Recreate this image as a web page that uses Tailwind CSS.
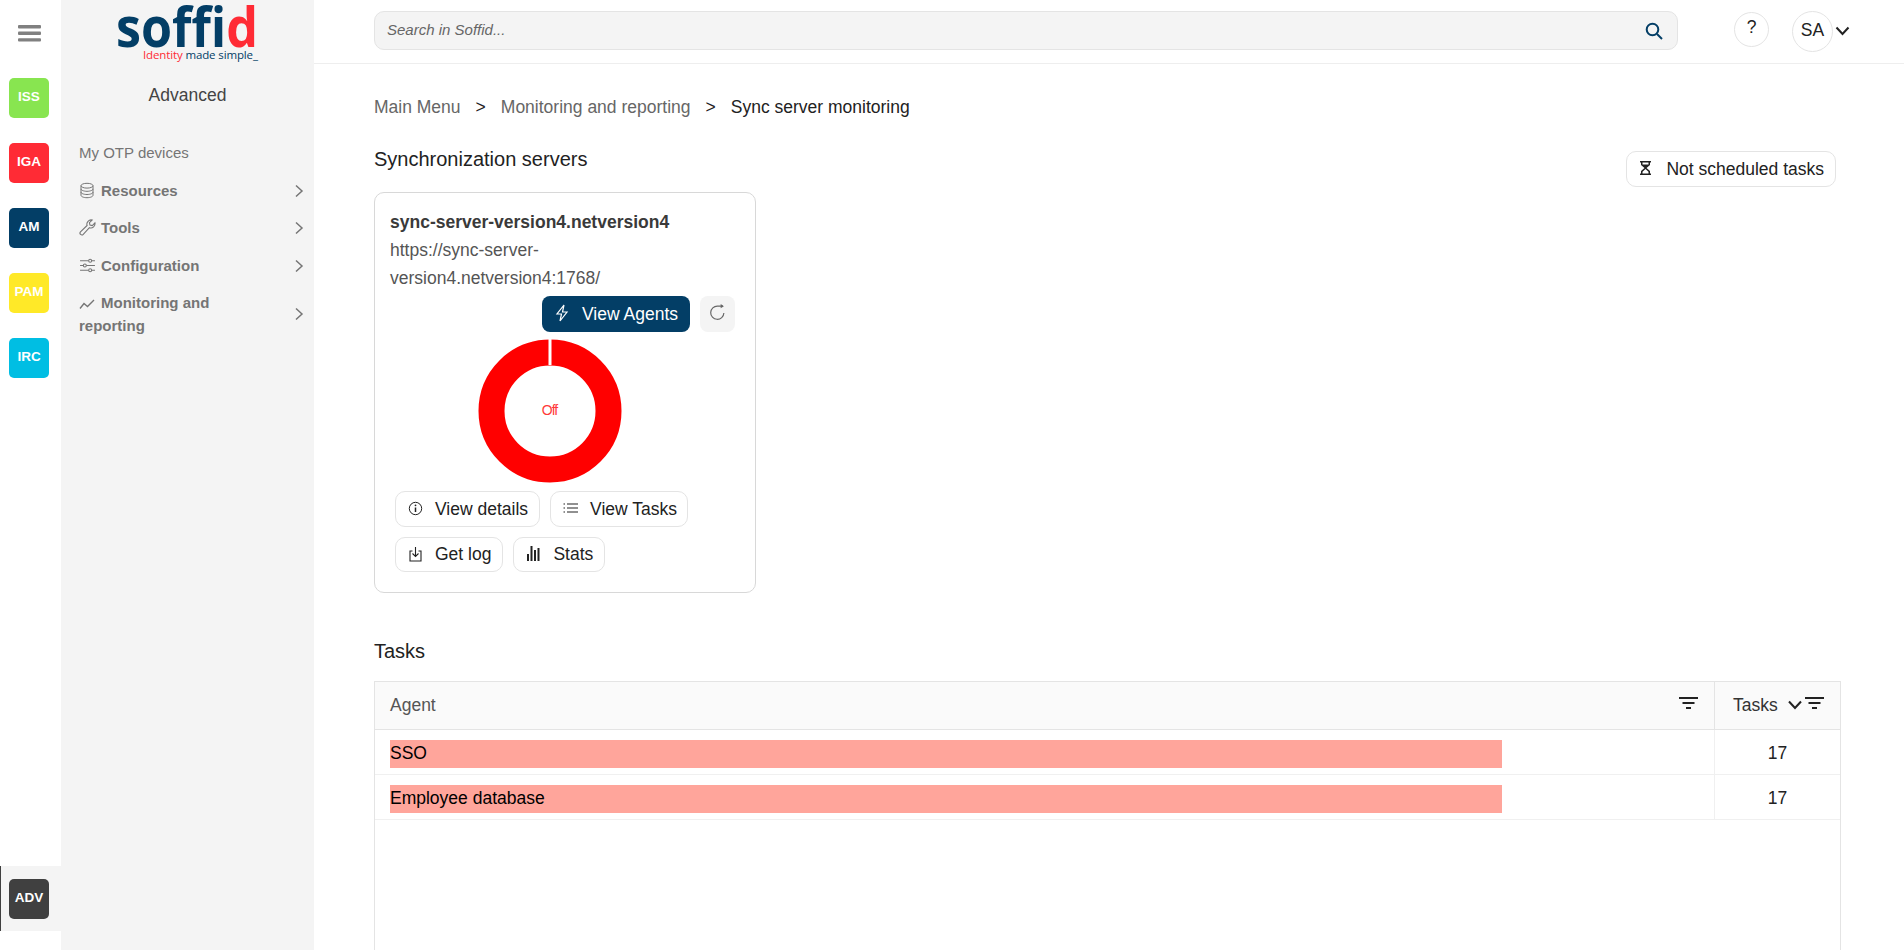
<!DOCTYPE html>
<html>

<head>
    <meta name="viewport" content="width=device-width, initial-scale=1.0">
    <script src="https://cdn.jsdelivr.net/npm/@tailwindcss/browser@4"></script>
    <title>Sync server monitoring</title>
</head>

<body class="bg-white font-['Liberation_Sans',Arial,sans-serif] text-[17.5px] text-[#222] h-[950px] overflow-hidden">
    <div class="flex h-[950px]">
        <!-- application rail -->
        <div class="w-[61px] shrink-0 flex flex-col">
            <div class="h-[78px] flex justify-center pt-[25px] pr-[3px]">
                <svg width="23" height="17" viewBox="0 0 23 17" fill="#808080"><rect y="0" width="23" height="3.4" rx="1"/><rect y="6.6" width="23" height="3.4" rx="1"/><rect y="13.2" width="23" height="3.4" rx="1"/></svg>
            </div>
            <div class="flex flex-col gap-[25px] pl-[9px]">
                <div class="w-10 h-10 rounded-[5px] bg-[#88e550] text-white text-[13.5px] font-bold flex items-center justify-center pb-[2px]">ISS</div>
                <div class="w-10 h-10 rounded-[5px] bg-[#ff2b35] text-white text-[13.5px] font-bold flex items-center justify-center pb-[2px]">IGA</div>
                <div class="w-10 h-10 rounded-[5px] bg-[#033e66] text-white text-[13.5px] font-bold flex items-center justify-center pb-[2px]">AM</div>
                <div class="w-10 h-10 rounded-[5px] bg-[#ffe928] text-white text-[13.5px] font-bold flex items-center justify-center pb-[2px]">PAM</div>
                <div class="w-10 h-10 rounded-[5px] bg-[#00bee3] text-white text-[13.5px] font-bold flex items-center justify-center pb-[2px]">IRC</div>
            </div>
            <div class="mt-auto mb-[19px] h-[65px] bg-[#f4f4f4] border-l border-[#404040] pl-[8px] flex items-center">
                <div class="w-10 h-10 rounded-[5px] bg-[#404040] text-white text-[13.5px] font-bold flex items-center justify-center pb-[1px]">ADV</div>
            </div>
        </div>

        <!-- sidebar -->
        <div class="w-[253px] shrink-0 bg-[#f4f4f4] flex flex-col">
            <svg class="h-[63px] w-[253px] shrink-0" viewBox="0 0 253 63">
                <text x="55" y="47" textLength="142" lengthAdjust="spacingAndGlyphs" font-family="Open Sans" font-weight="700" font-size="55" fill="#033e66">soff<tspan fill="#ff2b35">id</tspan></text>
                <text x="82" y="59" textLength="115" font-family="Open Sans" font-size="11.5" fill="#033e66"><tspan fill="#ff2b35">Identity</tspan> made simple_</text>
            </svg>
            <div class="text-center text-[#444] leading-[26px] mt-[19px]">Advanced</div>
            <div class="mt-[33px] pl-[18px] pr-[10px] text-[#757575] text-[15px] leading-[23px]">
                <div class="h-[23px]">My OTP devices</div>
                <div class="flex items-center justify-between font-bold mt-[15px] h-[23px]">
                    <span class="flex items-center gap-[6px]">
                        <svg width="16" height="17" viewBox="0 0 16 16" fill="none" stroke="#757575" stroke-width="1"><ellipse cx="8" cy="3.2" rx="6" ry="2.4"/><path d="M2 3.2v9.6c0 1.3 2.7 2.4 6 2.4s6-1.1 6-2.4V3.2M2 6.4c0 1.3 2.7 2.4 6 2.4s6-1.1 6-2.4M2 9.6c0 1.3 2.7 2.4 6 2.4s6-1.1 6-2.4"/></svg>
                        Resources
                    </span>
                    <svg width="10" height="14" viewBox="0 0 10 14" fill="none" stroke="#757575" stroke-width="1.5"><path d="M2 1.5 8 7l-6 5.5"/></svg>
                </div>
                <div class="flex items-center justify-between font-bold mt-[14px] h-[23px]">
                    <span class="flex items-center gap-[5px]">
                        <svg width="17" height="17" viewBox="0 0 16 16" fill="none" stroke="#757575" stroke-width="1"><path d="M15 3.6a4 4 0 0 1-5.2 4.6L4 14.4a1.7 1.7 0 0 1-2.6-2.3l6.2-6A4 4 0 0 1 12.4 1L9.8 3.5l.5 2.2 2.2.5z"/></svg>
                        Tools
                    </span>
                    <svg width="10" height="14" viewBox="0 0 10 14" fill="none" stroke="#757575" stroke-width="1.5"><path d="M2 1.5 8 7l-6 5.5"/></svg>
                </div>
                <div class="flex items-center justify-between font-bold mt-[15px] h-[23px]">
                    <span class="flex items-center gap-[5px]">
                        <svg width="17" height="15" viewBox="0 0 16 14" fill="none" stroke="#757575" stroke-width="1"><path d="M1 2.5h8M12 2.5h3M1 7h3M7 7h8M1 11.5h8M12 11.5h3"/><circle cx="10.5" cy="2.5" r="1.4"/><circle cx="5.5" cy="7" r="1.4"/><circle cx="10.5" cy="11.5" r="1.4"/></svg>
                        Configuration
                    </span>
                    <svg width="10" height="14" viewBox="0 0 10 14" fill="none" stroke="#757575" stroke-width="1.5"><path d="M2 1.5 8 7l-6 5.5"/></svg>
                </div>
                <div class="flex items-center justify-between font-bold mt-[14px]">
                    <div class="w-[150px]">
                        <svg class="inline-block mr-[6px] align-[-2px]" width="16" height="12" viewBox="0 0 16 12" fill="none" stroke="#757575" stroke-width="1.4"><path d="M1 10.5 5 5.5l3.500 3L15 2"/></svg>Monitoring and reporting
                    </div>
                    <svg width="10" height="14" viewBox="0 0 10 14" fill="none" stroke="#757575" stroke-width="1.5"><path d="M2 1.5 8 7l-6 5.5"/></svg>
                </div>
            </div>
        </div>

        <!-- main -->
        <div class="flex-1 min-w-0 flex flex-col">
            <div class="h-[64px] shrink-0 border-b border-[#eeeeee] flex pl-[60px]">
                <div class="w-[1304px] h-[39px] mt-[11px] bg-[#f4f4f4] border border-[#e4e4e4] rounded-[10px] flex items-center justify-between pl-[12px] pr-[14px]">
                    <span class="italic text-[15px] text-[#666]">Search in Soffid...</span>
                    <svg width="18" height="18" viewBox="0 0 18 18" fill="none" stroke="#033e66" stroke-width="2"><circle cx="7.5" cy="7.5" r="5.8"/><path d="m12 12 5 5"/></svg>
                </div>
                <div class="w-[35px] h-[35px] ml-[56px] mt-[12px] rounded-full border border-[#e4e4e4] flex items-center justify-center pb-[5px]">?</div>
                <div class="w-[41px] h-[41px] ml-[23px] mt-[11px] rounded-full border border-[#e4e4e4] flex items-center justify-center pb-[3px]">SA</div>
                <svg class="ml-[2px] mt-[26px]" width="15" height="10" viewBox="0 0 15 10" fill="none" stroke="#222" stroke-width="2"><path d="M1.5 1.5 7.5 8l6-6.500"/></svg>
            </div>

            <div class="flex-1 min-h-0 pl-[60px] pr-[63px] overflow-hidden flex flex-col">
                <div class="mt-[31px] h-[25px] leading-[25px] flex whitespace-nowrap">
                    <span class="text-[#666]">Main Menu</span>
                    <span class="mx-[15px]">&gt;</span>
                    <span class="text-[#666]">Monitoring and reporting</span>
                    <span class="mx-[15px]">&gt;</span>
                    <span>Sync server monitoring</span>
                </div>
                <div class="flex justify-between mt-[23px] pr-[5px]">
                    <div class="text-[20px] leading-[28px] mt-[2px]">Synchronization servers</div>
                    <button class="h-[36px] mt-[8px] px-[11px] rounded-[10px] border border-[#e4e4e4] flex items-center gap-[13px]">
                        <svg class="mb-[2px]" width="15" height="16" viewBox="0 0 15 16" fill="#222"><path d="M2 1h11v1.500h-1v2.500L8.500 8 12 11v2.500h1V15H2v-1.500h1V11l3.500-3L3 5V2.500H2zM4.500 2.500V4.500h6V2.500zM7.500 9l-3 2.700v1.800h6v-1.800z"/></svg>
                        Not scheduled tasks
                    </button>
                </div>

                <!-- server card -->
                <div class="w-[382px] h-[401px] mt-[5px] border border-[#d8d8d8] rounded-[10px] pt-[15px] px-[15px]">
                    <div class="font-bold text-[#3a3a3a] leading-[28px]">sync-server-version4.netversion4</div>
                    <div class="text-[#555] leading-[28px] w-[300px]">https://sync-server-version4.netversion4:1768/</div>
                    <div class="flex justify-end gap-[10px] pr-[5px] mt-[4px]">
                        <button class="h-[36px] px-[12px] rounded-[8px] bg-[#033e66] text-white flex items-center gap-[12px]">
                            <svg class="mb-[2px]" width="16" height="18" viewBox="0 0 16 18" fill="none" stroke="#fff" stroke-width="1.200"><path d="M10 1 3 10h4.500L6 17l7-9H8.500z"/></svg>
                            View Agents
                        </button>
                        <button class="w-[35px] h-[36px] rounded-[8px] bg-[#f4f4f4] flex items-center justify-center pb-[4px]">
                            <svg width="17" height="17" viewBox="0 0 16 16" fill="none" stroke="#666" stroke-width="1.100"><path d="M14 8.500A6.200 6.200 0 1 1 8 2h5"/><path d="M11 0l3 2-3 2z" fill="#666" stroke="none"/></svg>
                        </button>
                    </div>
                    <div class="flex justify-center pr-[31px] mt-[7px]">
                        <div class="relative w-[144px] h-[144px]">
                            <svg width="144" height="144" viewBox="0 0 144 144">
                                <circle cx="72" cy="72" r="58.500" fill="none" stroke="#ff0000" stroke-width="26"/>
                                <rect x="70.500" y="0" width="3" height="26" fill="#fff"/>
                            </svg>
                            <div class="absolute inset-0 flex items-center justify-center text-[14px] tracking-[-1px] text-[#ff3a3a] pb-[1px]">Off</div>
                        </div>
                    </div>
                    <div class="flex flex-wrap gap-x-[10px] gap-y-[10px] mt-[8px] pl-[5px]">
                        <button class="h-[36px] pl-[12px] pr-[11px] rounded-[10px] border border-[#e4e4e4] flex items-center gap-[12px]">
                            <svg class="mb-[2px]" width="15" height="15" viewBox="0 0 15 15" fill="none" stroke="#222" stroke-width="1"><circle cx="7.500" cy="7.500" r="6.200"/><path d="M7.500 6.500V11" stroke-width="1.500"/><circle cx="7.500" cy="4.300" r=".9" fill="#222" stroke="none"/></svg>
                            View details
                        </button>
                        <button class="h-[36px] pl-[12px] pr-[10px] rounded-[10px] border border-[#e4e4e4] flex items-center gap-[12px]">
                            <svg class="mb-[2px]" width="15" height="12" viewBox="0 0 15 12" fill="none" stroke="#222" stroke-width="1.200"><path d="M4 2h11M4 6h11M4 10h11M.5 2h1.500M.5 6h1.500M.5 10h1.500"/></svg>
                            View Tasks
                        </button>
                        <button class="h-[35px] pl-[12px] pr-[11px] rounded-[10px] border border-[#e4e4e4] flex items-center gap-[12px]">
                            <svg class="mb-[2px]" width="15" height="16" viewBox="0 0 15 16" fill="none" stroke="#222" stroke-width="1.100"><path d="M4.500 5H2v10h11V5h-2.500M7.500 1v9.500M4.500 7.500l3 3 3-3"/></svg>
                            Get log
                        </button>
                        <button class="h-[35px] pl-[12px] pr-[11px] rounded-[10px] border border-[#e4e4e4] flex items-center gap-[11px]">
                            <svg class="mb-[2px]" width="16" height="17" viewBox="0 0 16 17" fill="#222"><rect x="1" y="9" width="2" height="7"/><rect x="4.500" y="1" width="2" height="15"/><rect x="8" y="5" width="2" height="11"/><rect x="11.500" y="3" width="2" height="13"/></svg>
                            Stats
                        </button>
                    </div>
                </div>

                <div class="text-[20px] leading-[28px] mt-[44px]">Tasks</div>

                <!-- tasks table -->
                <div class="mt-[16px] flex-1 border-x border-t border-[#e4e4e4] flex flex-col">
                    <div class="h-[48px] shrink-0 bg-[#fafafa] border-b border-[#e4e4e4] flex">
                        <div class="flex-1 pl-[15px] pr-[16px] flex items-center justify-between text-[#555]">
                            Agent
                            <svg class="mb-[5px]" width="19" height="13" viewBox="0 0 19 13" fill="#222"><rect width="19" height="2"/><rect x="3.500" y="5" width="12" height="2"/><rect x="7" y="10" width="5" height="2"/></svg>
                        </div>
                        <div class="w-[126px] border-l border-[#e4e4e4] flex items-center pl-[18px] text-[#333]">
                            Tasks
                            <svg class="ml-[10px] mb-[1px]" width="14" height="10" viewBox="0 0 14 10" fill="none" stroke="#222" stroke-width="2"><path d="M1 1.500 7 8l6-6.500"/></svg>
                            <svg class="ml-[3px] mb-[5px]" width="19" height="13" viewBox="0 0 19 13" fill="#222"><rect width="19" height="2"/><rect x="3.500" y="5" width="12" height="2"/><rect x="7" y="10" width="5" height="2"/></svg>
                        </div>
                    </div>
                    <div class="h-[45px] shrink-0 border-b border-[#f0f0f0] flex">
                        <div class="flex-1 pl-[15px] pt-[10px]">
                            <div class="h-[28px] w-[1112px] bg-[#ffa59b] text-black leading-[26px]">SSO</div>
                        </div>
                        <div class="w-[126px] border-l border-[#f0f0f0] flex items-center justify-center pt-[2px]">17</div>
                    </div>
                    <div class="h-[45px] shrink-0 border-b border-[#f0f0f0] flex">
                        <div class="flex-1 pl-[15px] pt-[10px]">
                            <div class="h-[28px] w-[1112px] bg-[#ffa59b] text-black leading-[26px]">Employee database</div>
                        </div>
                        <div class="w-[126px] border-l border-[#f0f0f0] flex items-center justify-center pt-[2px]">17</div>
                    </div>
                </div>
            </div>
        </div>
    </div>
</body>

</html>
